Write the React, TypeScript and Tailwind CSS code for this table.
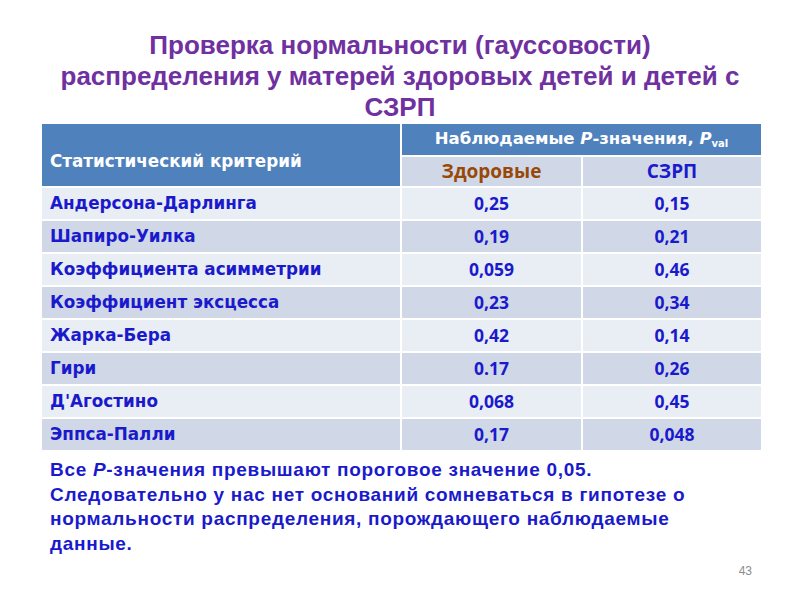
import React from "react";

const rows: [string, string, string][] = [
  ["Андерсона-Дарлинга", "0,25", "0,15"],
  ["Шапиро-Уилка", "0,19", "0,21"],
  ["Коэффициента асимметрии", "0,059", "0,46"],
  ["Коэффициент эксцесса", "0,23", "0,34"],
  ["Жарка-Бера", "0,42", "0,14"],
  ["Гири", "0.17", "0,26"],
  ["Д'Агостино", "0,068", "0,45"],
  ["Эппса-Палли", "0,17", "0,048"],
];

export default function App() {
  return (
    <div className="w-[800px] h-[600px] bg-white flex flex-col font-['Liberation_Sans',Arial,sans-serif]">
      <h1 className="pt-[30px] text-center text-[26px] leading-[31px] font-bold text-[#7030A0] px-[40px]">
        Проверка нормальности (гауссовости)
        <br />
        распределения у матерей здоровых детей и детей с
        <br />
        СЗРП
      </h1>
      <div className="ml-[42px] mt-[1px] grid grid-cols-[358px_179px_178px] gap-[2px] bg-white">
        <div className="row-span-2 bg-[#4F81BD] text-white font-bold text-[16.8px] flex items-end pb-[12px] pl-[8px] font-['DejaVu_Sans',Verdana,sans-serif]">
          Статистический критерий
        </div>
        <div className="col-span-2 h-[31px] bg-[#4F81BD] text-white font-bold text-[16.5px] flex items-center justify-center font-['DejaVu_Sans',Verdana,sans-serif]">
          <span>
            Наблюдаемые <i>P</i>-значения, <i>P</i>
            <sub className="text-[10px]">val</sub>
          </span>
        </div>
        <div className="h-[29px] bg-[#D0D8E8] flex items-center justify-center font-bold text-[19px] text-[#984807] font-['Open_Sans',Lato,sans-serif]">
          Здоровые
        </div>
        <div className="h-[29px] bg-[#D0D8E8] flex items-center justify-center font-bold text-[19px] text-[#1a1acc] font-['Open_Sans',Lato,sans-serif]">
          СЗРП
        </div>
        {rows.map(([name, a, b], i) => (
          <React.Fragment key={name}>
            <div
              className={
                i % 2 === 0
                  ? "bg-[#E9EDF4] h-[31px] flex items-center pl-[8px] font-bold text-[16.8px] text-[#1a1acc] font-['DejaVu_Sans',Verdana,sans-serif]"
                  : "bg-[#D0D8E8] h-[31px] flex items-center pl-[8px] font-bold text-[16.8px] text-[#1a1acc] font-['DejaVu_Sans',Verdana,sans-serif]"
              }
            >
              {name}
            </div>
            {[a, b].map((v, j) => (
              <div
                key={j}
                className={
                  i % 2 === 0
                    ? "bg-[#E9EDF4] h-[31px] flex items-center justify-center font-bold text-[17.5px] text-[#1a1acc] font-['Open_Sans',Lato,sans-serif]"
                    : "bg-[#D0D8E8] h-[31px] flex items-center justify-center font-bold text-[17.5px] text-[#1a1acc] font-['Open_Sans',Lato,sans-serif]"
                }
              >
                {v}
              </div>
            ))}
          </React.Fragment>
        ))}
      </div>
      <p className="mt-[8px] ml-[50px] w-[720px] text-[19px] leading-[24.5px] tracking-[0.7px] font-bold text-[#1a1acc]">
        Все <i>P</i>-значения превышают пороговое значение 0,05.
        <br />
        Следовательно у нас нет оснований сомневаться в гипотезе о
        <br />
        нормальности распределения, порождающего наблюдаемые
        <br />
        данные.
      </p>
      <div className="mt-auto mb-[20px] pr-[48px] text-right text-[12px] text-[#8c8c8c]">43</div>
    </div>
  );
}
